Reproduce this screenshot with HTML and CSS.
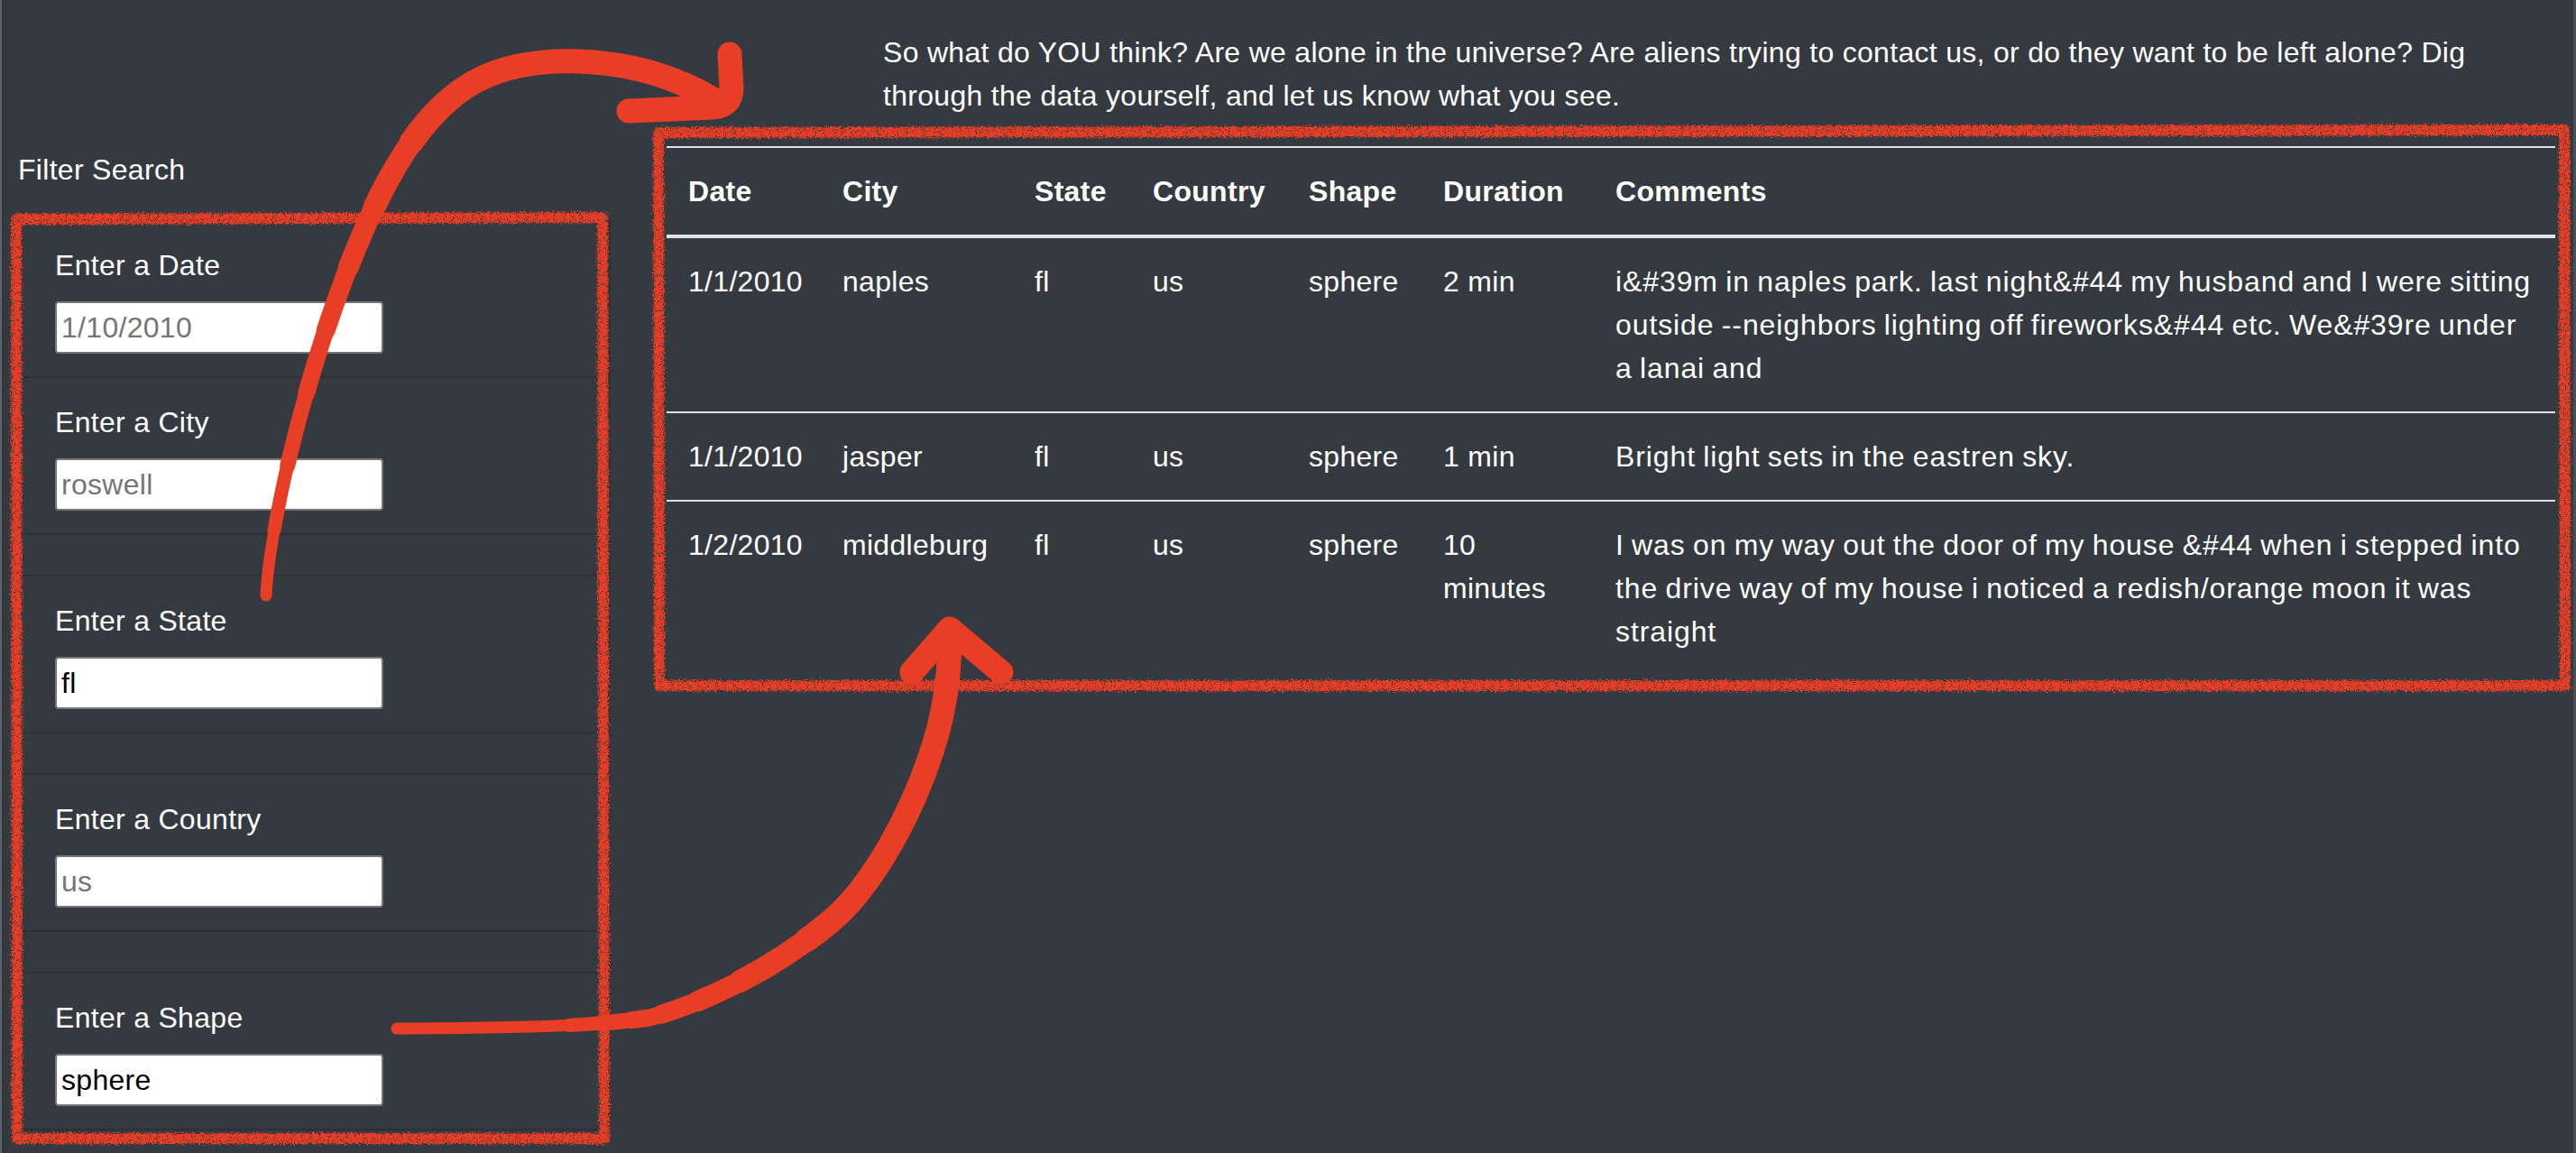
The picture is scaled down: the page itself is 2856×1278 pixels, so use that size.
FILE: index.html
```html
<!DOCTYPE html>
<html lang="en">
<head>
<meta charset="utf-8">
<title>UFO Sightings</title>
<link rel="stylesheet" href="styles.css">
</head>
<body>
<div class="page">
  <aside class="filters">
    <p class="filter-title">Filter Search</p>
    <ul class="list-group">
      <li class="item"><label class="field-label" for="date">Enter a Date</label><input class="field" id="date" type="text" placeholder="1/10/2010"></li>
      <li class="item"><label class="field-label" for="city">Enter a City</label><input class="field" id="city" type="text" placeholder="roswell"></li>
      <li class="item empty"></li>
      <li class="item"><label class="field-label" for="state">Enter a State</label><input class="field" id="state" type="text" value="fl"></li>
      <li class="item empty"></li>
      <li class="item"><label class="field-label" for="country">Enter a Country</label><input class="field" id="country" type="text" placeholder="us"></li>
      <li class="item empty"></li>
      <li class="item"><label class="field-label" for="shape">Enter a Shape</label><input class="field" id="shape" type="text" value="sphere"></li>
    </ul>
  </aside>
  <main class="content">
    <p class="intro">So what do YOU think? Are we alone in the universe? Are aliens trying to contact us, or do they want to be left alone? Dig through the data yourself, and let us know what you see.</p>
    <table class="sightings">
      <thead>
        <tr>
          <th class="c-date">Date</th>
          <th class="c-city">City</th>
          <th class="c-state">State</th>
          <th class="c-country">Country</th>
          <th class="c-shape">Shape</th>
          <th class="c-duration">Duration</th>
          <th class="c-comments">Comments</th>
        </tr>
      </thead>
      <tbody>
        <tr>
          <td>1/1/2010</td><td>naples</td><td>fl</td><td>us</td><td>sphere</td><td>2 min</td>
          <td class="comment">i&amp;#39m in naples park. last night&amp;#44 my husband and I were sitting outside --neighbors lighting off fireworks&amp;#44 etc. We&amp;#39re under a lanai and</td>
        </tr>
        <tr>
          <td>1/1/2010</td><td>jasper</td><td>fl</td><td>us</td><td>sphere</td><td>1 min</td>
          <td class="comment">Bright light sets in the eastren sky.</td>
        </tr>
        <tr>
          <td>1/2/2010</td><td>middleburg</td><td>fl</td><td>us</td><td>sphere</td><td>10 minutes</td>
          <td class="comment">I was on my way out the door of my house &amp;#44 when i stepped into the drive way of my house i noticed a redish/orange moon it was straight</td>
        </tr>
      </tbody>
    </table>
  </main>
</div>

<svg class="marks" width="2856" height="1278" viewBox="0 0 2856 1278" xmlns="http://www.w3.org/2000/svg" aria-hidden="true">
  <defs>
    <filter id="chalk" x="-3%" y="-3%" width="106%" height="106%">
      <feTurbulence type="fractalNoise" baseFrequency="0.55" numOctaves="3" seed="4" result="noise"/>
      <feDisplacementMap in="SourceGraphic" in2="noise" scale="8" xChannelSelector="R" yChannelSelector="G" result="rough"/>
      <feTurbulence type="fractalNoise" baseFrequency="1.1" numOctaves="1" seed="9" result="n2"/>
      <feColorMatrix in="n2" type="matrix" values="0 0 0 0 0  0 0 0 0 0  0 0 0 0 0  14 0 0 0 -8.4" result="holes"/>
      <feComposite in="rough" in2="holes" operator="out"/>
    </filter>
  </defs>

  <g class="box" filter="url(#chalk)">
    <path d="M18,243 L668,241 L670,1262 L19,1262 Z"/>
    <path d="M730,147 L2843,144 L2844,760 L731,760 Z"/>
  </g>

  <g class="arrow">
    <path d="M295,660 C300,560 360,330 430,200 C480,110 530,65 640,68 C710,70 760,90 800,116" pathLength="100" stroke-width="13"/>
    <path d="M295,660 C300,560 360,330 430,200 C480,110 530,65 640,68 C710,70 760,90 800,116" pathLength="100" stroke-width="15" stroke-dasharray="100 200" stroke-dashoffset="-8"/>
    <path d="M295,660 C300,560 360,330 430,200 C480,110 530,65 640,68 C710,70 760,90 800,116" pathLength="100" stroke-width="17" stroke-dasharray="100 200" stroke-dashoffset="-16"/>
    <path d="M295,660 C300,560 360,330 430,200 C480,110 530,65 640,68 C710,70 760,90 800,116" pathLength="100" stroke-width="19" stroke-dasharray="100 200" stroke-dashoffset="-25"/>
    <path d="M295,660 C300,560 360,330 430,200 C480,110 530,65 640,68 C710,70 760,90 800,116" pathLength="100" stroke-width="21" stroke-dasharray="100 200" stroke-dashoffset="-33"/>
    <path d="M295,660 C300,560 360,330 430,200 C480,110 530,65 640,68 C710,70 760,90 800,116" pathLength="100" stroke-width="23" stroke-dasharray="100 200" stroke-dashoffset="-41"/>
    <path d="M295,660 C300,560 360,330 430,200 C480,110 530,65 640,68 C710,70 760,90 800,116" pathLength="100" stroke-width="25" stroke-dasharray="100 200" stroke-dashoffset="-49"/>
    <path d="M295,660 C300,560 360,330 430,200 C480,110 530,65 640,68 C710,70 760,90 800,116" pathLength="100" stroke-width="27" stroke-dasharray="100 200" stroke-dashoffset="-58"/>
    <path d="M697,123 L790,119 Q811,118 811,98 L809,60" stroke-width="27"/>
  </g>

  <g class="arrow">
    <path d="M440,1140 C540,1139 640,1140 720,1128 C770,1115 850,1080 920,1022 C965,985 1015,900 1040,810 C1050,770 1053,740 1053,700" pathLength="100" stroke-width="13"/>
    <path d="M440,1140 C540,1139 640,1140 720,1128 C770,1115 850,1080 920,1022 C965,985 1015,900 1040,810 C1050,770 1053,740 1053,700" pathLength="100" stroke-width="15" stroke-dasharray="100 200" stroke-dashoffset="-22"/>
    <path d="M440,1140 C540,1139 640,1140 720,1128 C770,1115 850,1080 920,1022 C965,985 1015,900 1040,810 C1050,770 1053,740 1053,700" pathLength="100" stroke-width="17" stroke-dasharray="100 200" stroke-dashoffset="-26"/>
    <path d="M440,1140 C540,1139 640,1140 720,1128 C770,1115 850,1080 920,1022 C965,985 1015,900 1040,810 C1050,770 1053,740 1053,700" pathLength="100" stroke-width="19" stroke-dasharray="100 200" stroke-dashoffset="-30"/>
    <path d="M440,1140 C540,1139 640,1140 720,1128 C770,1115 850,1080 920,1022 C965,985 1015,900 1040,810 C1050,770 1053,740 1053,700" pathLength="100" stroke-width="21" stroke-dasharray="100 200" stroke-dashoffset="-34"/>
    <path d="M440,1140 C540,1139 640,1140 720,1128 C770,1115 850,1080 920,1022 C965,985 1015,900 1040,810 C1050,770 1053,740 1053,700" pathLength="100" stroke-width="23" stroke-dasharray="100 200" stroke-dashoffset="-39"/>
    <path d="M440,1140 C540,1139 640,1140 720,1128 C770,1115 850,1080 920,1022 C965,985 1015,900 1040,810 C1050,770 1053,740 1053,700" pathLength="100" stroke-width="25" stroke-dasharray="100 200" stroke-dashoffset="-45"/>
    <path d="M440,1140 C540,1139 640,1140 720,1128 C770,1115 850,1080 920,1022 C965,985 1015,900 1040,810 C1050,770 1053,740 1053,700" pathLength="100" stroke-width="27" stroke-dasharray="100 200" stroke-dashoffset="-55"/>
    <path d="M1011,745 L1053,697 L1110,745" stroke-width="27"/>
  </g>
</svg>
</body>
</html>
```

FILE: styles.css
```css
html, body {
  margin: 0;
  padding: 0;
}

body {
  position: relative;
  width: 2856px;
  height: 1278px;
  overflow: hidden;
  background: #353a40;
  box-shadow: inset 2px 0 0 #5d6268, inset -3px 0 0 #4a4f55;
  color: #ffffff;
  font-family: "Liberation Sans", Arial, sans-serif;
  font-size: 32px;
  line-height: 48px;
  letter-spacing: 0.3px;
}

.page {
  display: flex;
  height: 100%;
}

/* ---------- left filter column ---------- */
.filters {
  flex: none;
  width: 739px;
  padding-left: 20px;
  box-sizing: border-box;
}

.filter-title {
  margin: 164px 0 31px;
}

.list-group {
  list-style: none;
  margin: 0;
  padding: 0;
  width: 657px;
  box-sizing: border-box;
  border: 2px solid rgba(0, 0, 0, 0.14);
}

.item {
  padding: 25px 39px;
}

.item + .item {
  border-top: 2px solid rgba(0, 0, 0, 0.14);
}

.item.empty {
  height: 46px;
  padding: 0;
  box-sizing: border-box;
}

.field-label {
  display: block;
  margin-bottom: 16px;
}

.field {
  display: block;
  width: 364px;
  height: 58px;
  box-sizing: border-box;
  margin: 0;
  padding: 0 5px;
  border: 2px solid #767676;
  border-radius: 4px;
  background: #ffffff;
  color: #000000;
  font-family: "Liberation Sans", Arial, sans-serif;
  font-size: 32px;
  letter-spacing: 0.3px;
}

.field::placeholder {
  color: #757575;
}

/* ---------- right content column ---------- */
.content {
  flex: 1;
  min-width: 0;
}

.intro {
  width: 1800px;
  margin: 34px 0 32px 240px;
}

.sightings {
  width: 2094px;
  table-layout: fixed;
  border-collapse: collapse;
}

.sightings th,
.sightings td {
  box-sizing: border-box;
  padding: 24px;
  text-align: left;
  vertical-align: top;
  border-top: 2px solid #dee2e6;
}

.sightings th {
  font-weight: bold;
  border-bottom: 4px solid #dee2e6;
}

.sightings .comment {
  letter-spacing: 0.9px;
  word-spacing: -1.5px;
}

.c-date { width: 171px; }
.c-city { width: 213px; }
.c-state { width: 131px; }
.c-country { width: 173px; }
.c-shape { width: 149px; }
.c-duration { width: 191px; }
.c-comments { width: 1066px; }

/* ---------- hand-drawn annotations ---------- */
.marks {
  position: absolute;
  left: 0;
  top: 0;
  pointer-events: none;
}

.box path {
  fill: none;
  stroke: #e63c25;
  stroke-width: 12;
  stroke-linejoin: round;
}

.arrow path {
  fill: none;
  stroke: #e83e25;
  stroke-linecap: round;
  stroke-linejoin: round;
}
```
